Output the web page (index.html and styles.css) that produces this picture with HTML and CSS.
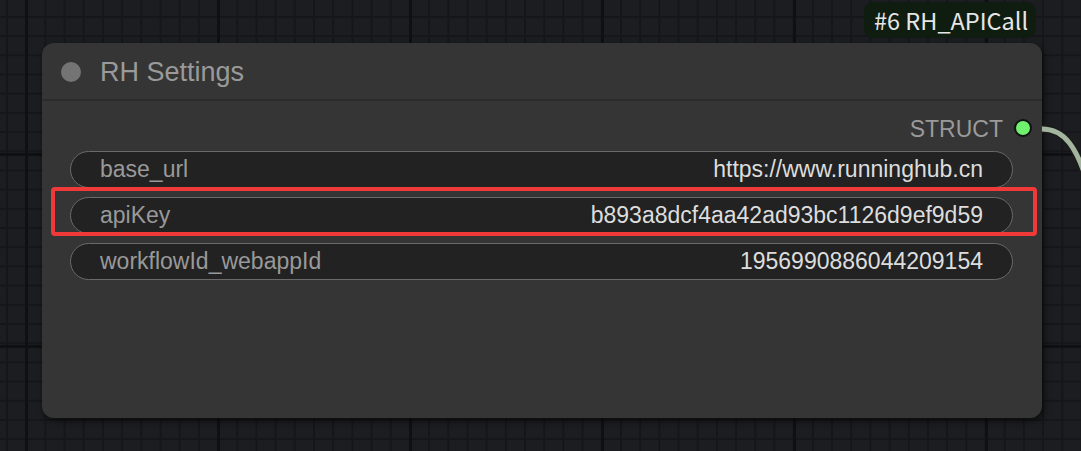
FILE: index.html
```html
<!DOCTYPE html>
<html>
<head>
<meta charset="utf-8">
<link rel="stylesheet" href="styles.css">
</head>
<body>
<div class="canvas">
  <div class="badge">#6 RH_APICall</div>
  <div class="node">
    <div class="node-header">
      <span class="node-dot"></span>
      <span class="node-title">RH Settings</span>
    </div>
    <div class="node-body">
      <div class="output-row">
        <span class="output-label">STRUCT</span>
        <span class="output-slot"></span>
      </div>
      <div class="widgets">
        <div class="widget"><span class="w-label">base_url</span><span class="w-value">https://www.runninghub.cn</span></div>
        <div class="widget"><span class="w-label">apiKey</span><span class="w-value">b893a8dcf4aa42ad93bc1126d9ef9d59</span></div>
        <div class="widget"><span class="w-label">workflowId_webappId</span><span class="w-value">1956990886044209154</span></div>
      </div>
    </div>
    <div class="highlight"></div>
  </div>
  <svg class="wire" width="1081" height="451" viewBox="0 0 1081 451">
    <path d="M1042 129 C1062 129 1078 142 1092 200" fill="none" stroke="#1a1c1a" stroke-width="8"/>
    <path d="M1042 129 C1062 129 1078 142 1092 200" fill="none" stroke="#a4b59f" stroke-width="5"/>
  </svg>
</div>
</body>
</html>
```
FILE: styles.css
```css
html, body {
  margin: 0;
  padding: 0;
}
body {
  width: 1081px;
  height: 451px;
  overflow: hidden;
  background-color: #1c1d20;
  background-image:
    linear-gradient(90deg, #0f1012 3px, transparent 3px),
    linear-gradient(#0f1012 3px, transparent 3px),
    linear-gradient(90deg, #151619 2px, transparent 2px),
    linear-gradient(#151619 2px, transparent 2px);
  background-size: 192px 192px, 192px 192px, 19.2px 19.2px, 19.2px 19.2px;
  background-position: 25px 0, 0 153px, 6px 0, 0 16px;
  font-family: "Liberation Sans", Arial, sans-serif;
}
.canvas {
  position: relative;
  width: 1081px;
  height: 451px;
  display: flex;
  flex-direction: column;
  padding: 2px 0 0 42px;
  box-sizing: border-box;
}
.badge {
  align-self: flex-start;
  margin-left: 822px;
  height: 36px;
  padding: 0 0 0 10px;
  box-sizing: border-box;
  width: 172px;
  background: #0f1c10;
  border-radius: 9px;
  color: #e6e6e6;
  font-family: "Noto Sans CJK SC", "Noto Sans", sans-serif;
  font-size: 23.5px;
  line-height: 36px;
  white-space: nowrap;
  overflow: hidden;
}
.node {
  position: relative;
  margin-top: 5px;
  width: 1000px;
  height: 375px;
  background: #353535;
  border-radius: 12px;
  box-shadow: 2px 3px 6px rgba(0, 0, 0, 0.55);
}
.node-header {
  border-bottom: 2px solid #2c2c2c;
  display: flex;
  align-items: center;
  padding-left: 19px;
  padding-top: 3px;
  box-sizing: border-box;
  height: 58px;
}
.node-dot {
  width: 20px;
  height: 20px;
  border-radius: 50%;
  background: #747474;
  margin-right: 19px;
  margin-top: -2px;
}
.node-title {
  color: #9a9a9a;
  font-size: 27px;
}
.node-body {
  padding-top: 8px;
}
.output-row {
  height: 40px;
  display: flex;
  justify-content: flex-end;
  align-items: center;
  padding-right: 10px;
}
.output-label {
  color: #9a9a9a;
  font-size: 23px;
  margin-right: 11px;
}
.output-slot {
  width: 14px;
  height: 14px;
  border-radius: 50%;
  background: #6ef26e;
  border: 2px solid #111;
  margin-top: -3px;
}
.widgets {
  margin-top: 2px;
  display: flex;
  flex-direction: column;
  gap: 9px;
  padding: 0 29px 0 28px;
}
.widget {
  height: 37px;
  box-sizing: border-box;
  border: 1.5px solid #6a6a6a;
  border-radius: 19px;
  background: #222222;
  display: flex;
  justify-content: space-between;
  align-items: center;
  padding: 0 29px 0 29px;
  font-size: 23px;
}
.w-label {
  color: #999999;
}
.w-value {
  color: #dddddd;
}
.highlight {
  position: absolute;
  left: 9px;
  top: 144px;
  width: 986px;
  height: 49px;
  box-sizing: border-box;
  border: 4px solid #f03a3a;
  border-radius: 4px;
}
.wire {
  position: absolute;
  left: 0;
  top: 0;
}
```
